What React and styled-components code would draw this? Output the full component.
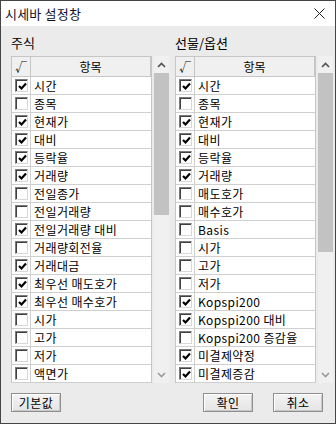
import React from "react";
import styled, { createGlobalStyle } from "styled-components";

const GlobalStyle = createGlobalStyle`
  html, body {
    margin: 0;
    padding: 0;
    background: #ffffff;
  }
  * {
    box-sizing: border-box;
  }
`;

const stockItems = [
  ["시간", true],
  ["종목", false],
  ["현재가", true],
  ["대비", true],
  ["등락율", true],
  ["거래량", true],
  ["전일종가", false],
  ["전일거래량", false],
  ["전일거래량 대비", true],
  ["거래량회전율", false],
  ["거래대금", true],
  ["최우선 매도호가", true],
  ["최우선 매수호가", true],
  ["시가", false],
  ["고가", false],
  ["저가", false],
  ["액면가", false],
];

const futureItems = [
  ["시간", true],
  ["종목", false],
  ["현재가", true],
  ["대비", true],
  ["등락율", true],
  ["거래량", true],
  ["매도호가", false],
  ["매수호가", false],
  ["Basis", false],
  ["시가", false],
  ["고가", false],
  ["저가", false],
  ["Kopspi200", true],
  ["Kopspi200 대비", true],
  ["Kopspi200 증감율", false],
  ["미결제약정", true],
  ["미결제증감", true],
];

export default function App() {
  return (
    <>
      <GlobalStyle />
      <Window>
        <TitleBar>
          <Title>시세바 설정창</Title>
          <CloseIcon viewBox="0 0 11 11">
            <path d="M0.5 0.5 L10.5 10.5 M10.5 0.5 L0.5 10.5" />
          </CloseIcon>
        </TitleBar>
        <Body>
          <Panels>
            <ItemPanel label="주식" items={stockItems} thumb={142} />
            <ItemPanel label="선물/옵션" items={futureItems} thumb={179} />
          </Panels>
          <Footer>
            <Button>기본값</Button>
            <Spacer />
            <Button>확인</Button>
            <Button>취소</Button>
          </Footer>
        </Body>
      </Window>
    </>
  );
}

function ItemPanel({ label, items, thumb }) {
  return (
    <Panel>
      <PanelLabel>{label}</PanelLabel>
      <ListFrame>
        <Grid>
          <HeaderRow>
            <HeaderCell $narrow>√</HeaderCell>
            <HeaderCell>항목</HeaderCell>
          </HeaderRow>
          {items.map(([name, checked]) => (
            <Row key={name}>
              <CheckCell>
                <CheckBox>
                  {checked && (
                    <svg viewBox="0 0 9 9" width="9" height="9">
                      <path
                        d="M1 4 L3.5 6.5 L8 1.5"
                        fill="none"
                        stroke="#000"
                        strokeWidth="2.2"
                      />
                    </svg>
                  )}
                </CheckBox>
              </CheckCell>
              <NameCell>{name}</NameCell>
            </Row>
          ))}
        </Grid>
        <ScrollBar>
          <ArrowButton>
            <svg viewBox="0 0 9 6" width="9" height="6">
              <path d="M1 5 L4.5 1.5 L8 5" fill="none" stroke="#505050" strokeWidth="1.6" />
            </svg>
          </ArrowButton>
          <Thumb style={{ height: thumb }} />
          <Track />
          <ArrowButton>
            <svg viewBox="0 0 9 6" width="9" height="6">
              <path d="M1 1 L4.5 4.5 L8 1" fill="none" stroke="#9a9a9a" strokeWidth="1.6" />
            </svg>
          </ArrowButton>
        </ScrollBar>
      </ListFrame>
    </Panel>
  );
}

const Window = styled.div`
  width: 336px;
  height: 424px;
  border: 1px solid #454545;
  display: flex;
  flex-direction: column;
  overflow: hidden;
  font-family: "Noto Sans CJK KR", "Noto Sans", sans-serif;
`;

const TitleBar = styled.div`
  height: 25px;
  flex: none;
  background: #ffffff;
  display: flex;
  align-items: center;
  padding: 0 10px 0 4px;
`;

const Title = styled.div`
  flex: 1;
  font-size: 13px;
  color: #10102a;
  letter-spacing: 0.2px;
  padding-bottom: 1px;
`;

const CloseIcon = styled.svg`
  width: 11px;
  height: 11px;
  path {
    stroke: #222;
    stroke-width: 1;
    fill: none;
  }
`;

const Body = styled.div`
  flex: 1;
  background: #ebebeb;
  display: flex;
  flex-direction: column;
  padding: 8px 2px 0 10px;
`;

const Panels = styled.div`
  display: flex;
  gap: 6px;
`;

const Panel = styled.div`
  width: 158px;
  display: flex;
  flex-direction: column;
`;

const PanelLabel = styled.div`
  height: 22px;
  font-size: 13px;
  line-height: 18px;
  color: #000;
`;

const ListFrame = styled.div`
  display: flex;
  height: 327px;
  overflow: hidden;
`;

const Grid = styled.div`
  width: 141px;
  background: #ffffff;
  border-left: 1px solid #c6c6c6;
  border-right: 1px solid #c6c6c6;
  display: flex;
  flex-direction: column;
  flex: none;
`;

const HeaderRow = styled.div`
  height: 21px;
  flex: none;
  display: flex;
  background: #ebebeb;
`;

const HeaderCell = styled.div`
  width: ${(p) => (p.$narrow ? "19px" : "auto")};
  flex: ${(p) => (p.$narrow ? "none" : "1")};
  border: 1px solid #c6c6c6;
  border-left: ${(p) => (p.$narrow ? "none" : "0")};
  background: #f0f0f0;
  display: flex;
  align-items: center;
  justify-content: center;
  font-size: 12px;
  color: #000;
`;

const Row = styled.div`
  height: 18px;
  flex: none;
  display: flex;
  border-bottom: 1px solid #cfcfcf;
`;

const CheckCell = styled.div`
  width: 19px;
  flex: none;
  border-right: 1px solid #cfcfcf;
  display: flex;
  align-items: center;
  padding-left: 3px;
`;

const CheckBox = styled.span`
  width: 13px;
  height: 13px;
  background: #ffffff;
  border-top: 1px solid #7a7a7a;
  border-left: 1px solid #7a7a7a;
  border-right: 1px solid #d8d8d8;
  border-bottom: 1px solid #d8d8d8;
  box-shadow: inset 1px 1px 0 #404040;
  display: flex;
  align-items: center;
  justify-content: center;
  padding: 1px 0 0 1px;
`;

const NameCell = styled.div`
  flex: 1;
  padding-left: 3px;
  font-size: 12px;
  line-height: 17px;
  letter-spacing: 0.4px;
  color: #000;
  white-space: nowrap;
  overflow: hidden;
`;

const ScrollBar = styled.div`
  width: 15px;
  margin-left: 2px;
  flex: none;
  display: flex;
  flex-direction: column;
  background: #f0f0f0;
`;

const ArrowButton = styled.div`
  height: 17px;
  flex: none;
  display: flex;
  align-items: center;
  justify-content: center;
  background: #f0f0f0;
`;

const Thumb = styled.div`
  flex: none;
  background: #c2c2c2;
`;

const Track = styled.div`
  flex: 1;
  background: #f0f0f0;
`;

const Footer = styled.div`
  display: flex;
  align-items: flex-start;
  gap: 20px;
  padding: 10px 10px 0 0;
`;

const Spacer = styled.div`
  flex: 1;
`;

const Button = styled.button`
  width: 50px;
  height: 19px;
  padding: 0;
  font-family: "Noto Sans CJK KR", "Noto Sans", sans-serif;
  font-size: 12px;
  letter-spacing: 0.4px;
  color: #000;
  background: linear-gradient(#f4f4f4, #e4e4e4);
  border: 1px solid #8f8f8f;
  box-shadow: inset 1px 1px 0 #ffffff, inset -1px -1px 0 #c8c8c8;
  display: flex;
  align-items: center;
  justify-content: center;
`;
